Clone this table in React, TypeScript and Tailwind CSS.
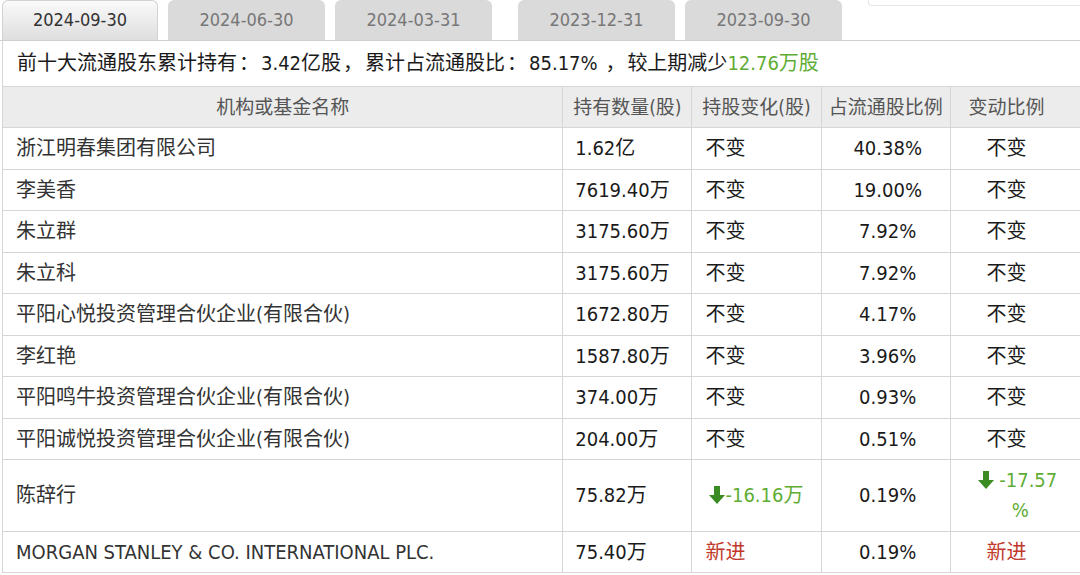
import React from 'react';

type Row = {
  name: string;
  amount: string;
  change: React.ReactNode;
  ratio: string;
  changeRatio: React.ReactNode;
};

const FONT = { fontFamily: '"DejaVu Sans Condensed", Tahoma, "Noto Sans CJK SC", sans-serif' };

const DownArrow = ({ className = '' }: { className?: string }) => (
  <svg width="16" height="18" viewBox="0 0 16 18" className={`inline-block align-[-2px] ${className}`}>
    <path d="M5 0h6v9h5l-8 9-8-9h5z" fill="#3a8c22" />
  </svg>
);

const Unchanged = () => <span>不变</span>;
const NewIn = () => <span className="text-[#c0392b]">新进</span>;
const Punct = ({ c }: { c: string }) => <span className="mx-[2px]">{c}</span>;

const rows: Row[] = [
  { name: '浙江明春集团有限公司', amount: '1.62亿', change: <Unchanged />, ratio: '40.38%', changeRatio: <Unchanged /> },
  { name: '李美香', amount: '7619.40万', change: <Unchanged />, ratio: '19.00%', changeRatio: <Unchanged /> },
  { name: '朱立群', amount: '3175.60万', change: <Unchanged />, ratio: '7.92%', changeRatio: <Unchanged /> },
  { name: '朱立科', amount: '3175.60万', change: <Unchanged />, ratio: '7.92%', changeRatio: <Unchanged /> },
  { name: '平阳心悦投资管理合伙企业(有限合伙)', amount: '1672.80万', change: <Unchanged />, ratio: '4.17%', changeRatio: <Unchanged /> },
  { name: '李红艳', amount: '1587.80万', change: <Unchanged />, ratio: '3.96%', changeRatio: <Unchanged /> },
  { name: '平阳鸣牛投资管理合伙企业(有限合伙)', amount: '374.00万', change: <Unchanged />, ratio: '0.93%', changeRatio: <Unchanged /> },
  { name: '平阳诚悦投资管理合伙企业(有限合伙)', amount: '204.00万', change: <Unchanged />, ratio: '0.51%', changeRatio: <Unchanged /> },
  {
    name: '陈辞行',
    amount: '75.82万',
    change: (
      <span className="text-[#5fad35]">
        <DownArrow className="ml-[4px]" />-16.16万
      </span>
    ),
    ratio: '0.19%',
    changeRatio: (
      <span className="text-[#5fad35]">
        <span className="block pl-[22px]">
          <DownArrow /> -17.57
        </span>
        <span className="block pl-[28px]">%</span>
      </span>
    ),
  },
  { name: 'MORGAN STANLEY & CO. INTERNATIONAL PLC.', amount: '75.40万', change: <NewIn />, ratio: '0.19%', changeRatio: <NewIn /> },
];

const tabs = [
  { label: '2024-09-30', active: true },
  { label: '2024-06-30' },
  { label: '2024-03-31' },
  { label: '2023-12-31', wideGap: true },
  { label: '2023-09-30' },
];

const App = () => {
  return (
    <div className="w-[1080px] h-[575px] overflow-hidden bg-white text-[#1a1a1a]" style={FONT}>
      {/* period tabs */}
      <div className="relative h-[40px]">
        <div className="flex h-full pl-[2px] gap-[10px]">
          {tabs.map(tab => (
            <div
              key={tab.label}
              className={
                tab.active
                  ? 'w-[156px] h-full rounded-t-[6px] border border-b-0 border-[#d2d2d2] bg-gradient-to-b from-[#fafafa] to-[#dedede] text-[#333] text-[18px] leading-[38px] text-center'
                  : tab.wideGap
                    ? 'ml-[16px] w-[157px] h-full rounded-t-[6px] bg-[#dadada] text-[#777] text-[18px] leading-[40px] text-center'
                    : 'w-[157px] h-full rounded-t-[6px] bg-[#dadada] text-[#777] text-[18px] leading-[40px] text-center'
              }
            >
              {tab.label}
            </div>
          ))}
        </div>
        <div className="absolute right-0 top-0 w-[212px] h-[6px] border-l border-b border-[#e6e6e6] rounded-bl-[4px] bg-white" />
      </div>

      <div className="border-t border-[#cfcfcf]">
        <div className="ml-[2px] border-l border-[#d6d6d6]">
          <div className="h-[45px] pl-[14px] text-[20px] leading-[45px] whitespace-nowrap">
            前十大流通股东累计持有<Punct c="：" />3.42亿股<Punct c="，" />累计占流通股比<Punct c="：" />85.17% <Punct c="，" />
            较上期减少
            <span className="text-[#5fad35]">12.76万股</span>
          </div>

          <table className="table-fixed border-collapse w-[1090px] text-[20px]">
            <colgroup>
              <col className="w-[559px]" />
              <col className="w-[129px]" />
              <col className="w-[129px]" />
              <col className="w-[129px]" />
              <col className="w-[142px]" />
            </colgroup>
            <thead>
              <tr className="bg-[#ececec] text-[#555] text-[19px]">
                <th className="border border-l-0 border-[#d6d6d6] font-normal leading-[30px] py-[5px] text-center">机构或基金名称</th>
                <th className="border border-[#d6d6d6] font-normal leading-[30px] py-[5px] text-center">持有数量(股)</th>
                <th className="border border-[#d6d6d6] font-normal leading-[30px] py-[5px] text-center">持股变化(股)</th>
                <th className="border border-[#d6d6d6] font-normal leading-[30px] py-[5px] text-center">占流通股比例</th>
                <th className="border border-[#d6d6d6] font-normal leading-[30px] py-[5px] text-center pr-[30px]">变动比例</th>
              </tr>
            </thead>
            <tbody>
              {rows.map(row => (
                <tr key={row.name}>
                  <td className="border border-l-0 border-[#d6d6d6] leading-[30px] py-[5.25px] pl-[13px] text-[#333] whitespace-nowrap">
                    {row.name}
                  </td>
                  <td className="border border-[#d6d6d6] leading-[30px] py-[5.25px] pl-[12px] whitespace-nowrap">{row.amount}</td>
                  <td className="border border-[#d6d6d6] leading-[30px] py-[5.25px] pl-[13px] whitespace-nowrap">{row.change}</td>
                  <td className="border border-[#d6d6d6] leading-[30px] py-[5.25px] text-center pl-[4px]">{row.ratio}</td>
                  <td className="border border-[#d6d6d6] leading-[30px] py-[5.25px] text-center pr-[30px] whitespace-nowrap">
                    {row.changeRatio}
                  </td>
                </tr>
              ))}
            </tbody>
          </table>
        </div>
      </div>
    </div>
  );
};

export default App;
